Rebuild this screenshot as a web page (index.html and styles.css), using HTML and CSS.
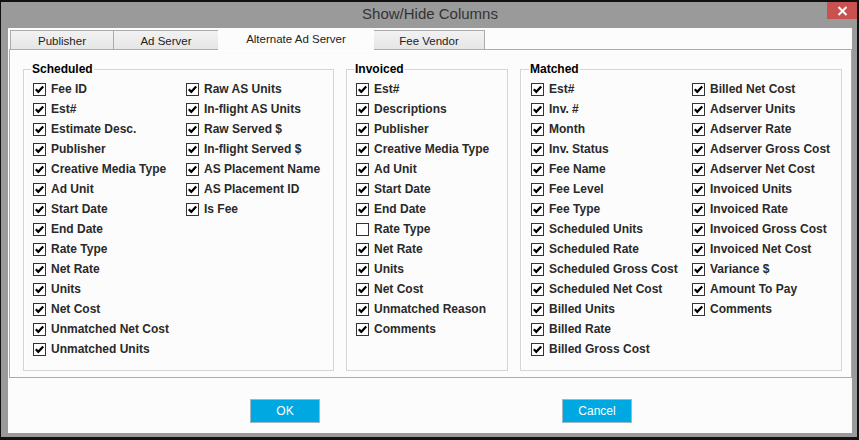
FILE: index.html
```html
<!DOCTYPE html>
<html lang="en">

<head>
  <meta charset="UTF-8">
  <meta name="viewport" content="width=device-width, initial-scale=1.0">
  <title>Show/Hide Columns</title>
  <link rel="stylesheet" href="styles.css">
</head>

<body>
  <div class="window">
    <header class="titlebar">
      <span class="title">Show/Hide Columns</span>
      <button class="close-btn" aria-label="Close">
        <svg width="11" height="10" viewBox="0 0 11 10">
          <path d="M1.5 1 L9.5 9 M9.5 1 L1.5 9" stroke="#fff" stroke-width="2" />
        </svg>
      </button>
    </header>

    <main class="client">
      <nav class="tabs">
        <span class="tab">Publisher</span>
        <span class="tab">Ad Server</span>
        <span class="tab tab-active">Alternate Ad Server</span>
        <span class="tab">Fee Vendor</span>
      </nav>

      <section class="tab-panel">
        <fieldset class="group group-scheduled">
          <legend>Scheduled</legend>
          <div class="col col-wide">
            <label class="check"><span class="box on"></span>Fee ID</label>
            <label class="check"><span class="box on"></span>Est#</label>
            <label class="check"><span class="box on"></span>Estimate Desc.</label>
            <label class="check"><span class="box on"></span>Publisher</label>
            <label class="check"><span class="box on"></span>Creative Media Type</label>
            <label class="check"><span class="box on"></span>Ad Unit</label>
            <label class="check"><span class="box on"></span>Start Date</label>
            <label class="check"><span class="box on"></span>End Date</label>
            <label class="check"><span class="box on"></span>Rate Type</label>
            <label class="check"><span class="box on"></span>Net Rate</label>
            <label class="check"><span class="box on"></span>Units</label>
            <label class="check"><span class="box on"></span>Net Cost</label>
            <label class="check"><span class="box on"></span>Unmatched Net Cost</label>
            <label class="check"><span class="box on"></span>Unmatched Units</label>
          </div>
          <div class="col">
            <label class="check"><span class="box on"></span>Raw AS Units</label>
            <label class="check"><span class="box on"></span>In-flight AS Units</label>
            <label class="check"><span class="box on"></span>Raw Served $</label>
            <label class="check"><span class="box on"></span>In-flight Served $</label>
            <label class="check"><span class="box on"></span>AS Placement Name</label>
            <label class="check"><span class="box on"></span>AS Placement ID</label>
            <label class="check"><span class="box on"></span>Is Fee</label>
          </div>
        </fieldset>

        <fieldset class="group group-invoiced">
          <legend>Invoiced</legend>
          <div class="col">
            <label class="check"><span class="box on"></span>Est#</label>
            <label class="check"><span class="box on"></span>Descriptions</label>
            <label class="check"><span class="box on"></span>Publisher</label>
            <label class="check"><span class="box on"></span>Creative Media Type</label>
            <label class="check"><span class="box on"></span>Ad Unit</label>
            <label class="check"><span class="box on"></span>Start Date</label>
            <label class="check"><span class="box on"></span>End Date</label>
            <label class="check"><span class="box"></span>Rate Type</label>
            <label class="check"><span class="box on"></span>Net Rate</label>
            <label class="check"><span class="box on"></span>Units</label>
            <label class="check"><span class="box on"></span>Net Cost</label>
            <label class="check"><span class="box on"></span>Unmatched Reason</label>
            <label class="check"><span class="box on"></span>Comments</label>
          </div>
        </fieldset>

        <fieldset class="group group-matched">
          <legend>Matched</legend>
          <div class="col col-matched">
            <label class="check"><span class="box on"></span>Est#</label>
            <label class="check"><span class="box on"></span>Inv. #</label>
            <label class="check"><span class="box on"></span>Month</label>
            <label class="check"><span class="box on"></span>Inv. Status</label>
            <label class="check"><span class="box on"></span>Fee Name</label>
            <label class="check"><span class="box on"></span>Fee Level</label>
            <label class="check"><span class="box on"></span>Fee Type</label>
            <label class="check"><span class="box on"></span>Scheduled Units</label>
            <label class="check"><span class="box on"></span>Scheduled Rate</label>
            <label class="check"><span class="box on"></span>Scheduled Gross Cost</label>
            <label class="check"><span class="box on"></span>Scheduled Net Cost</label>
            <label class="check"><span class="box on"></span>Billed Units</label>
            <label class="check"><span class="box on"></span>Billed Rate</label>
            <label class="check"><span class="box on"></span>Billed Gross Cost</label>
          </div>
          <div class="col">
            <label class="check"><span class="box on"></span>Billed Net Cost</label>
            <label class="check"><span class="box on"></span>Adserver Units</label>
            <label class="check"><span class="box on"></span>Adserver Rate</label>
            <label class="check"><span class="box on"></span>Adserver Gross Cost</label>
            <label class="check"><span class="box on"></span>Adserver Net Cost</label>
            <label class="check"><span class="box on"></span>Invoiced Units</label>
            <label class="check"><span class="box on"></span>Invoiced Rate</label>
            <label class="check"><span class="box on"></span>Invoiced Gross Cost</label>
            <label class="check"><span class="box on"></span>Invoiced Net Cost</label>
            <label class="check"><span class="box on"></span>Variance $</label>
            <label class="check"><span class="box on"></span>Amount To Pay</label>
            <label class="check"><span class="box on"></span>Comments</label>
          </div>
        </fieldset>
      </section>

      <footer class="actions">
        <button class="btn btn-ok">OK</button>
        <button class="btn btn-cancel">Cancel</button>
      </footer>
    </main>
  </div>
</body>

</html>
```

FILE: styles.css
```css
*,
*::before,
*::after {
  box-sizing: border-box;
}

body {
  margin: 0;
  height: 440px;
  overflow: hidden;
  background-color: #111;
  font-family: "Liberation Sans", Arial, sans-serif;
}

:root {
  --frame-gray: #9a9a9a;
  --client-white: #fcfcfc;
  --line-gray: #ababab;
  --group-line: #d5d5d5;
  --text-dark: #2a2a2a;
  --accent-blue: #00a8e1;
}

/* WINDOW FRAME */
.window {
  display: flex;
  flex-direction: column;

  width: 856px;
  height: 435px;
  margin: 2px 0 0 1px;
  padding: 0 5px 4px 7px;

  background-color: var(--frame-gray);
}

.titlebar {
  display: flex;
  justify-content: center;
  align-items: center;

  position: relative;

  height: 26px;
  flex: none;
}

.title {
  font-size: 15px;
  color: #333;
  margin-top: -3px;
}

.close-btn {
  position: absolute;
  top: 0;
  right: -5px;

  display: grid;
  place-items: center;

  width: 30px;
  height: 17px;
  padding: 0;

  border: none;
  background-color: #c9514f;
}

/* CLIENT */
.client {
  display: flex;
  flex-direction: column;

  flex: 1;
  padding: 2px 0 0 1px;

  background-color: var(--client-white);
}

.tabs {
  display: flex;
  align-items: flex-end;

  height: 19px;
  padding-left: 1px;
}

.tab {
  display: grid;
  place-items: center;

  height: 19px;
  padding-top: 1px;

  border: 1px solid var(--line-gray);
  border-bottom: none;
  margin-right: -1px;

  font-size: 11.5px;
  color: #222;

  background: linear-gradient(#f2f2f2, #e6e6e6);
}

.tab:nth-child(1) {
  width: 104px;
}

.tab:nth-child(2) {
  width: 106px;
}

.tab:nth-child(3) {
  width: 156px;
}

.tab:nth-child(4) {
  width: 112px;
}

.tab-active {
  position: relative;
  z-index: 1;

  height: 22px;
  margin-top: -3px;
  margin-bottom: -1px;
  padding-top: 0;
  padding-bottom: 1px;

  border-color: transparent;
  background: var(--client-white);
}

.tab-panel {
  display: flex;
  gap: 12px;

  width: 843px;
  height: 329px;
  padding: 0 9px 6px 13px;

  border: 1px solid var(--line-gray);
  box-shadow: inset 1px 1px 0 #fff;
}

/* GROUP BOXES */
.group {
  display: flex;

  margin: 12px 0 0;
  padding: 0 0 0 9px;

  border: 1px solid var(--group-line);
  box-shadow: 1px 1px 0 #fff inset;
}

.group legend {
  margin-left: -2px;
  padding: 0 1px;

  font-size: 12px;
  font-weight: 700;
  color: #000;
}

.group-scheduled {
  width: 311px;
}

.group-invoiced {
  width: 162px;
}

.group-matched {
  width: 322px;
  padding-left: 10px;
}

.col {
  display: flex;
  flex-direction: column;

  padding-top: 3px;
}

.col-wide {
  width: 153px;
}

.col-matched {
  width: 161px;
}

.check {
  display: flex;
  align-items: center;
  gap: 5px;

  height: 20px;

  font-size: 12px;
  font-weight: 700;
  color: var(--text-dark);
  white-space: nowrap;
}

.box {
  flex: none;

  width: 13px;
  height: 13px;

  border: 1px solid #333;
  background-color: #fff;
}

.box.on {
  background: #fff url("data:image/svg+xml;utf8,<svg xmlns='http://www.w3.org/2000/svg' width='11' height='11' viewBox='0 0 11 11'><path d='M1.8 5.2 L4.3 7.8 L9.2 2.4' fill='none' stroke='%23000' stroke-width='2.2'/></svg>") center / 11px 11px no-repeat;
}

/* BUTTONS */
.actions {
  display: flex;
  align-items: flex-start;
  gap: 242px;

  padding: 21px 0 0 241px;
}

.btn {
  width: 70px;
  height: 24px;
  padding: 0;

  border: 1px solid #9fb7c2;

  font-family: inherit;
  font-size: 12px;
  color: #fff;

  background-color: var(--accent-blue);
}
```
